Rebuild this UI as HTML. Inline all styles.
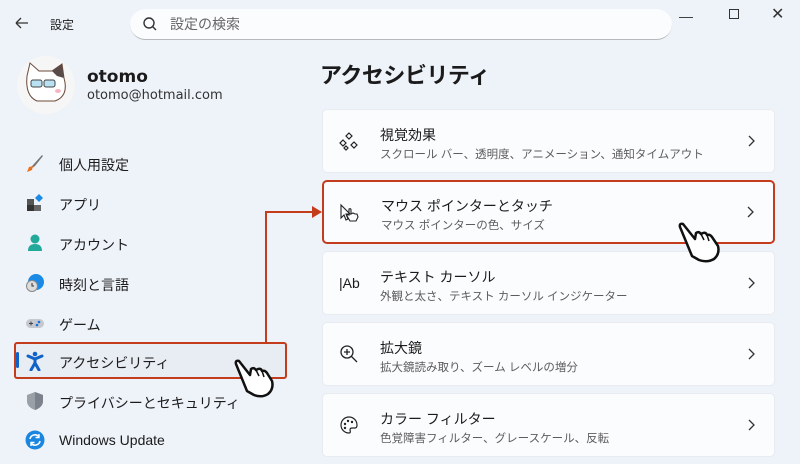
<!DOCTYPE html>
<html><head><meta charset="utf-8"><style>
*{margin:0;padding:0;box-sizing:border-box}
body{width:800px;height:464px;overflow:hidden;background:#eef2f9;font-family:"Liberation Sans","Noto Sans CJK JP",sans-serif;color:#1b1b1b;position:relative}
.abs{position:absolute}
.nav{position:absolute;left:59px;font-size:14px}
.ico{position:absolute;left:25px;width:20px;height:20px}
.card{position:absolute;left:322px;width:453px;height:64px;background:#fbfcfe;border-radius:5px;border:1px solid #e8ebf0}
.card .t{position:absolute;left:57px;top:15px;font-size:14px}
.card .s{position:absolute;left:57px;top:36px;font-size:11.5px;color:#5d5d5d}
.card .ch{position:absolute;right:18px;top:24px}
.card .ci{position:absolute;left:16px;top:21px}
</style></head><body>
<svg class="abs" style="left:14px;top:15px" width="16" height="16"><path d="M2 8H14M2 8L7 3M2 8L7 13" stroke="#333" stroke-width="1.3" fill="none"/></svg>
<div class="abs" style="left:50px;top:16px;font-size:12px">設定</div>
<div class="abs" style="left:130px;top:9px;width:542px;height:31px;background:#fbfcfe;border-radius:16px;border-bottom:1px solid #b5b8bc"></div>
<svg class="abs" style="left:142px;top:16px" width="16" height="16"><circle cx="7" cy="7" r="5" stroke="#333" stroke-width="1.4" fill="none"/><path d="M10.5 10.5L14 14" stroke="#333" stroke-width="1.4"/></svg>
<div class="abs" style="left:170px;top:14px;font-size:14px;color:#666">設定の検索</div>
<div class="abs" style="left:679px;top:8px;font-size:14px;color:#333">—</div>
<div class="abs" style="left:729px;top:9px;width:10px;height:10px;border:1px solid #333"></div>
<div class="abs" style="left:771px;top:4px;font-size:16px;color:#333">✕</div>
<div class="abs" style="left:17px;top:56px;width:58px;height:58px;border-radius:50%;background:#f6f6f6"></div>
<svg class="abs" style="left:17px;top:56px" width="58" height="58"><path d="M10 20L13 7L22 15L35 15L45 8L47 22Q52 40 38 45L20 45Q8 40 10 20Z" fill="#fff" stroke="#6b4a3a" stroke-width="1"/><path d="M35 15L45 8L47 22L40 20Z" fill="#5a4a48"/><rect x="14" y="24" width="11" height="7" rx="2" fill="#b8e2f2" stroke="#444"/><rect x="27" y="24" width="11" height="7" rx="2" fill="#b8e2f2" stroke="#444"/><ellipse cx="41" cy="35" rx="3" ry="2" fill="#f5b5c0"/></svg>
<div class="abs" style="left:87px;top:67px;font-size:17px;font-weight:bold;font-family:'DejaVu Sans',sans-serif">otomo</div>
<div class="abs" style="left:87px;top:88px;font-size:13px;font-family:'DejaVu Sans',sans-serif;color:#333">otomo@hotmail.com</div>

<svg class="ico" style="top:153px"><path d="M3 18L8 12L17 2L18 3L10 13Z" fill="#777"/><path d="M2 19L4 14L8 13L7 17Z" fill="#e8731f"/></svg>
<div class="nav" style="top:155px">個人用設定</div>
<svg class="ico" style="top:193px"><rect x="2" y="6" width="7" height="6" fill="#555"/><rect x="2" y="12" width="7" height="6" fill="#333"/><rect x="9" y="12" width="7" height="6" fill="#666"/><path d="M14 1L18 5L14 9L10 5Z" fill="#1a8ae6"/></svg>
<div class="nav" style="top:195px">アプリ</div>
<svg class="ico" style="top:233px"><circle cx="10" cy="6" r="4.5" fill="#22a99a"/><path d="M3 18Q3 11 10 11Q17 11 17 18Z" fill="#22a99a"/></svg>
<div class="nav" style="top:235px">アカウント</div>
<svg class="ico" style="top:273px"><circle cx="11" cy="9" r="8" fill="#1a8ae6"/><circle cx="7" cy="13" r="5.5" fill="#ddd" stroke="#888"/><path d="M7 10V13H9" stroke="#333" fill="none"/></svg>
<div class="nav" style="top:275px">時刻と言語</div>
<svg class="ico" style="top:313px"><rect x="1" y="6" width="18" height="9" rx="4.5" fill="#c5c8ce"/><circle cx="14" cy="9" r="1.3" fill="#1a6ed8"/><circle cx="12" cy="12" r="1.3" fill="#1a6ed8"/><path d="M4 10.5H8M6 8.5V12.5" stroke="#444"/></svg>
<div class="nav" style="top:315px">ゲーム</div>
<div class="abs" style="left:14px;top:342px;width:273px;height:37px;background:#e8ecf3;border:2px solid #c33d1c;border-radius:3px"></div>
<div class="abs" style="left:16px;top:352px;width:3px;height:16px;background:#0f62c8;border-radius:2px"></div>
<svg class="ico" style="top:351px"><circle cx="10" cy="3" r="2.3" fill="#0f62c8"/><path d="M3 5L10 8L17 5M10 8V12L6 19M10 12L14 19" stroke="#0f62c8" stroke-width="3" fill="none" stroke-linecap="round"/></svg>
<div class="nav" style="top:353px">アクセシビリティ</div>
<svg class="ico" style="top:391px"><path d="M10 1L18 4V10Q18 16 10 19Q2 16 2 10V4Z" fill="#9aa0a8"/><path d="M10 1L18 4V10Q18 16 10 19Z" fill="#7b828c"/></svg>
<div class="nav" style="top:393px">プライバシーとセキュリティ</div>
<svg class="ico" style="top:430px"><circle cx="10" cy="10" r="9.5" fill="#1a86e0"/><path d="M5 9A5 5 0 0 1 14 7M15 11A5 5 0 0 1 6 13" stroke="#fff" stroke-width="1.6" fill="none"/><path d="M14 4V7.5H10.5M6 16V12.5H9.5" stroke="#fff" stroke-width="1.4" fill="none"/></svg>
<div class="nav" style="top:432px">Windows Update</div>

<div class="abs" style="left:320px;top:58px;font-size:22px;font-weight:bold;color:#1b1b1b;letter-spacing:-0.5px">アクセシビリティ</div>

<svg class="abs" style="left:0;top:0" width="800" height="464"><path d="M266 342V212H314" stroke="#c33d1c" stroke-width="2" fill="none"/><path d="M312 206L322 212L312 218Z" fill="#c33d1c"/></svg>

<div class="card" style="top:109px"><svg class="ci" width="20" height="20"><path d="M10 2L13 5L10 8L7 5Z M4 9L7 12L4 15L1 12Z M15 11L18 14L15 17L12 14Z M7 15L9 17L7 19L5 17Z" stroke="#222" stroke-width="1.2" fill="none"/></svg><div class="t">視覚効果</div><div class="s">スクロール バー、透明度、アニメーション、通知タイムアウト</div><svg class="ch" width="10" height="14"><path d="M3 2L8 7L3 12" stroke="#333" stroke-width="1.3" fill="none"/></svg></div>
<div class="card" style="top:180px;border:2px solid #c33d1c"><svg class="ci" width="22" height="20" style="left:15px"><path d="M2 2V15L5 12L7 17L9 16L7 11H11Z" stroke="#222" stroke-width="1.1" fill="none"/><path d="M11 18L8 13Q8 11 10 12V6Q12 5 12 7V11L14 10L16 11L18 11L19 14L17 18Z" stroke="#222" stroke-width="1.1" fill="none"/></svg><div class="t" style="top:14px">マウス ポインターとタッチ</div><div class="s" style="top:35px">マウス ポインターの色、サイズ</div><svg class="ch" style="top:23px" width="10" height="14"><path d="M3 2L8 7L3 12" stroke="#333" stroke-width="1.3" fill="none"/></svg></div>
<div class="card" style="top:251px"><div class="ci" style="font-size:14px;top:23px">|Ab</div><div class="t">テキスト カーソル</div><div class="s">外観と太さ、テキスト カーソル インジケーター</div><svg class="ch" width="10" height="14"><path d="M3 2L8 7L3 12" stroke="#333" stroke-width="1.3" fill="none"/></svg></div>
<div class="card" style="top:322px"><svg class="ci" width="20" height="20"><circle cx="8" cy="8" r="6" stroke="#222" stroke-width="1.3" fill="none"/><path d="M12.5 12.5L18 18M5 8H11M8 5V11" stroke="#222" stroke-width="1.3"/></svg><div class="t">拡大鏡</div><div class="s">拡大鏡読み取り、ズーム レベルの増分</div><svg class="ch" width="10" height="14"><path d="M3 2L8 7L3 12" stroke="#333" stroke-width="1.3" fill="none"/></svg></div>
<div class="card" style="top:393px"><svg class="ci" width="20" height="20"><path d="M10 2A8 8 0 1 0 10 18Q12 18 11 15Q11 13 13 13H16Q18 13 18 10A8 8 0 0 0 10 2Z" stroke="#222" stroke-width="1.2" fill="none"/><circle cx="6" cy="9" r="1.2" fill="#222"/><circle cx="9" cy="6" r="1.2" fill="#222"/><circle cx="13" cy="7" r="1.2" fill="#222"/><circle cx="6" cy="13" r="1.2" fill="#222"/></svg><div class="t">カラー フィルター</div><div class="s">色覚障害フィルター、グレースケール、反転</div><svg class="ch" width="10" height="14"><path d="M3 2L8 7L3 12" stroke="#333" stroke-width="1.3" fill="none"/></svg></div>

<svg class="abs" style="left:232px;top:357px" width="48" height="42"><path d="M4 7Q3 3 7 4L18 18L19 12Q22 10 24 13L26 12Q29 11 30 14Q33 13 35 16L40 24Q42 32 36 37Q30 41 22 38L15 34Z" fill="#fff" stroke="#111" stroke-width="2.5" stroke-linejoin="round"/><path d="M24 13L27 19M30 14L32 20" stroke="#111" stroke-width="1.5"/></svg>
<svg class="abs" style="left:676px;top:220px" width="50" height="46"><path d="M4 7Q3 3 7 4L19 19L20 13Q23 11 25 14L27 13Q30 12 31 15Q34 14 36 17L42 26Q44 34 38 39Q31 43 23 40L16 36Z" fill="#fff" stroke="#111" stroke-width="2.5" stroke-linejoin="round"/><path d="M25 14L28 20M31 15L33 21" stroke="#111" stroke-width="1.5"/></svg>
</body></html>
